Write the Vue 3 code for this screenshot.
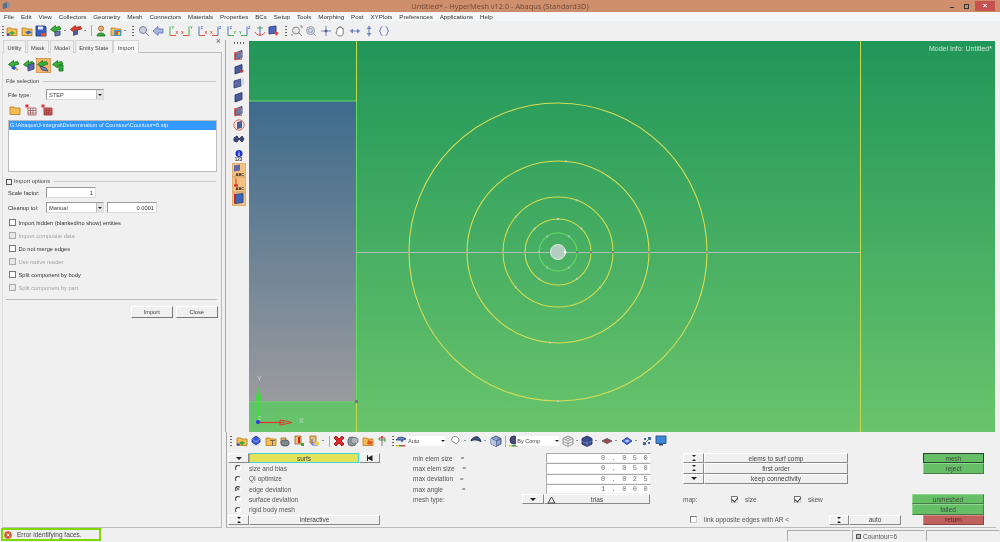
<template>
  <div class="app">
    <header class="title">
      <svg class="logo" width="9" height="9" viewBox="0 0 12 12"><path d="M1 4l6-3v8l-6 2z" fill="#5b6f8c"/><path d="M7 1l4 1v7l-4 0z" fill="#8a94a3"/></svg>
      <span class="title-text">Untitled* - HyperMesh v12.0 - Abaqus (Standard3D)</span>
      <span class="win">
        <i class="min"></i><i class="max"></i><b class="close">×</b>
      </span>
    </header>

    <nav class="menu">
      <span v-for="m in menus" :key="m">{{ m }}</span>
    </nav>

    <div class="toolbar top">
      <template v-for="(t, i) in topTools" :key="i">
        <span v-if="t === '|'" class="sep"></span>
        <span v-else-if="t === ':'" class="handle"></span>
        <span v-else-if="t === 'v'" class="dd"></span>
        <span v-else class="cell"><Ico :n="t" /></span>
      </template>
    </div>

    <div class="main">
      <aside class="panel">
        <div class="tabs">
          <span class="tab" v-for="t in tabs" :key="t" :class="{ on: t === 'Import' }">{{ t }}</span>
          <span class="tab-x">×</span>
        </div>
        <div class="body">
          <div class="imp-icons">
            <span v-for="(n, i) in importIcons" :key="n" class="imp" :class="{ on: i === 2 }"><Ico :n="n" /></span>
          </div>
          <div class="group">File selection</div>
          <div class="field">
            <label>File type:</label>
            <span class="select sel-a">STEP<i class="caret"></i></span>
          </div>
          <div class="file-tools">
            <Ico n="folder" />
            <Ico n="gridx" />
            <Ico n="gridr" />
          </div>
          <div class="list">
            <div class="list-sel">G:\Abaqus\J-integral\Determination of Countour\Countour=6.stp</div>
          </div>
          <div class="group opts"><span class="toggle"></span>Import options</div>
          <div class="field f2">
            <label>Scale factor:</label>
            <span class="input in-a">1</span>
          </div>
          <div class="field f3">
            <label>Cleanup tol:</label>
            <span class="select sel-a">Manual<i class="caret"></i></span>
            <span class="input in-a">0.0001</span>
          </div>
          <div class="checks">
            <div class="chk" v-for="c in checks" :key="c.t" :class="{ off: c.off }"><i></i>{{ c.t }}</div>
          </div>
          <div class="rule"></div>
          <div class="actions">
            <button class="pbtn">Import</button>
            <button class="pbtn">Close</button>
          </div>
        </div>
      </aside>

      <div class="vbar">
        <span class="vhandle"></span>
        <span class="vi" v-for="n in sideIcons" :key="n"><Ico :n="n" /></span>
        <span class="num">123</span>
        <span class="vo" v-for="n in sideOrange" :key="n"><Ico :n="n" :s="13" /></span>
      </div>

      <div class="view">
        <svg width="746" height="391" viewBox="249 41 746 391">
          <defs>
            <linearGradient id="part" x1="0" y1="0" x2="0" y2="1">
              <stop offset="0" stop-color="#3d6b8c" />
              <stop offset="1" stop-color="#9b9b9f" />
            </linearGradient>
          </defs>
          <rect x="249" y="101" width="107" height="301" fill="url(#part)" />
          <path d="M249 101H356M249 402H356M356.500 101V402" stroke="#62dc62" fill="none" />
          <path d="M356.500 41V101M356.500 402V432M860.500 41V432" stroke="#c9d94a" fill="none" />
          <path d="M356 252.500H860" stroke="#a8c0b4" fill="none" />
          <circle v-for="c in rings" :key="c.r" cx="558" cy="252" :r="c.r" :stroke="c.col" fill="none" stroke-width="1.100" />
          <circle cx="558" cy="252" r="7.500" fill="#b4cfc0" stroke="#e8ece8" />
          <circle cx="565" cy="252" r="1.500" fill="#fff" />
          <rect v-for="(m, i) in marks" :key="i" :x="m.x - 1" :y="m.y - 1" width="2" height="2" :fill="m.c" />
          <!-- global axes -->
          <path d="M258.500 422V392" stroke="#3be03b" stroke-width="1.200" />
          <path d="M258.500 388l-2.500 12h5z" fill="none" stroke="#3be03b" />
          <path d="M258 422.500H284" stroke="#e8332a" stroke-width="1.200" />
          <path d="M280 420v5l12-2.500z" fill="none" stroke="#e8332a" />
          <circle cx="258" cy="422" r="2" fill="#2438e8" />
          <text x="257" y="381" class="ax">Y</text>
          <text x="299" y="423" class="ax">X</text>
          <text x="258" y="420" class="ax sm">Z</text>
          <rect x="355" y="400" width="3" height="3" fill="#6d7a73" />
        </svg>
        <span class="model">Model Info: Untitled*</span>
      </div>
      <div class="edge"></div>
    </div>

    <section class="dock">
      <div class="toolbar low">
        <template v-for="(t, i) in lowTools" :key="i">
          <span v-if="t === '|'" class="sep"></span>
          <span v-else-if="t === ':'" class="handle"></span>
          <span v-else-if="t === 'v'" class="dd"></span>
          <span v-else-if="t === 'auto'" class="combo c0"><Ico n="auto" />
            <span class="combo-box">Auto<i class="tri"></i></span></span>
          <span v-else-if="t === 'comp'" class="combo c2"><Ico n="ball" />
            <span class="combo-box">By Comp<i class="tri"></i></span></span>
          <span v-else class="cell"><Ico :n="t" /></span>
        </template>
      </div>

      <div class="ctl">
        <div class="col col-a">
          <div class="row">
            <button class="btn arrow"><i class="down"></i></button>
            <button class="btn surfs">surfs</button>
            <button class="btn end"><i class="skip"></i></button>
          </div>
          <div class="row radio" v-for="(r, i) in radios" :key="r">
            <i class="dot" :class="{ on: i === 2 }"></i>{{ r }}
          </div>
          <div class="row">
            <button class="btn arrow"><i class="updown"></i></button>
            <button class="btn grow">interactive</button>
          </div>
        </div>

        <div class="col col-b">
          <div class="row" v-for="f in sizes" :key="f.l">
            <span class="lab">{{ f.l }}</span>
            <span class="eq" :style="{ marginLeft: f.e + 'px' }">=</span>
            <span class="num-in">{{ f.v }}</span>
          </div>
          <div class="row">
            <span class="lab mt">mesh type:</span>
            <button class="btn arrow b2"><i class="down"></i></button>
            <button class="btn trias"><svg width="9" height="8" viewBox="0 0 9 8"><path d="M4.500 1L8 7H1z" fill="none" stroke="#444" /></svg><span>trias</span></button>
          </div>
        </div>

        <div class="col col-c">
          <div class="row" v-for="(b, i) in opts" :key="b">
            <button class="btn arrow"><i :class="i === 2 ? 'down' : 'updown'"></i></button>
            <button class="btn wide">{{ b }}</button>
          </div>
          <div class="row"></div>
          <div class="row map">
            <span class="map-l">map:</span>
            <i class="box tick m1"></i><span class="m-t">size</span>
            <i class="box tick m2"></i><span class="m-t">skew</span>
          </div>
          <div class="row"></div>
          <div class="row link">
            <i class="box"></i>
            <span class="link-t">link opposite edges with AR &lt;</span>
            <button class="btn arrow b3"><i class="updown"></i></button>
            <button class="btn autob">auto</button>
          </div>
        </div>

        <div class="col col-d">
          <button class="go s sel">mesh</button>
          <button class="go s">reject</button>
          <div class="row"></div>
          <div class="row"></div>
          <button class="go">unmeshed</button>
          <button class="go">failed</button>
          <button class="go s red">return</button>
        </div>
      </div>
    </section>

    <footer class="status">
      <div class="err">
        <svg width="8" height="8" viewBox="0 0 8 8"><circle cx="4" cy="4" r="3.800" fill="#d9532b" /><path d="M2.500 2.500l3 3m0-3l-3 3" stroke="#fff" /></svg>
        <span>Error identifying faces.</span>
      </div>
      <div class="cells">
        <span class="scell s1"></span>
        <span class="scell s2"><i></i>Countour=6</span>
        <span class="scell s3"></span>
      </div>
    </footer>
  </div>
</template>

<script setup>
import { h } from 'vue'

const menus = ['File', 'Edit', 'View', 'Collectors', 'Geometry', 'Mesh', 'Connectors', 'Materials', 'Properties', 'BCs', 'Setup', 'Tools', 'Morphing', 'Post', 'XYPlots', 'Preferences', 'Applications', 'Help']
const tabs = ['Utility', 'Mask', 'Model', 'Entity State', 'Import']

const ax = (vc, hc, a, b) => [
  ['M3 1.500V10.500', 'none', vc],
  ['M3 10.500H9', 'none', hc],
  { t: a, x: 4.500, y: 4, c: vc },
  { t: b, x: 8.500, y: 8.500, c: hc },
]
const axr = (vc, hc, a, b) => [
  ['M8 1.500V10.500', 'none', vc],
  ['M2 10.500H8', 'none', hc],
  { t: a, x: 9, y: 4, c: vc },
  { t: b, x: 0, y: 8.500, c: hc },
]
const blue = '#3d5fc8', red = '#e0402e', green = '#2fae3a'
const folder = [['M1 3h4l1 1h5v6.500H1z', '#f4bd58', '#b98428']]
const plate = [['M2 4l7-2.500v7L2 11z', '#4a5c9a', '#2e3a70']]
const plateR = [['M2 4l7-2.500v7L2 11z', '#6c78a6', '#3c4878'], ['M1.500 3.500h7v7h-7z', 'none', '#e0604e']]
const garrow = [['M0.500 4.500L5.500 0.500v2l4-1 1.500 2.500-5 1.500v2.500z', '#3ab03a', '#1f7d1f']]

const icons = {
  cluster: [...folder.slice(0), ['M6 6l3 2-3 2-3-2z', '#3ab03a'], ['M2 8l2 1.500-2 1.500-1.500-1.500z', '#2b4bd0']],
  folderb: [...folder, ['M4 7l4-1.500 3 2-4 2z', '#3a6ac0']],
  floppy: [['M1 1h9l1 1v9H1z', '#3a5fc0', '#243c80'], ['M3 1.500h5v3H3z', '#e8ecf4'], ['M6 8l5 0v3H6z', '#e0502e']],
  garrow: [...garrow, ['M5 7l5-1v4l-5 1z', '#6b78a8', '#3c4878']],
  rarrow: [['M0.500 4.500L5.500 0.500v2l5-1 1 2.500-6 1.500v2.500z', '#e0402e', '#a02418'], ['M3 6l5-1.500v5l-5 1.500z', '#4a5c9a']],
  person: [['M6 1a2.300 2.300 0 110 5 2.300 2.300 0 010-5z', '#e8b070', '#9a6a30'], ['M2 11c0-4 8-4 8 0z', '#3aa03a', '#1f7d1f']],
  colorf: [...folder, ['M4 5h7v6H4z', '#3a9ad8'], ['M6 6h3v4H6z', '#e0502e'], ['M8 7h2v3H8z', '#f0d030']],
  zoom: [['M5 1.500a3.500 3.500 0 110 7 3.500 3.500 0 010-7z', '#c8d0dc', '#6878a0'], ['M7.500 7.500l3.500 3.500', 'none', '#6878a0']],
  larrow: [['M1 6l5-4.500v2.500h5v4H6v2.500z', '#a8b4e0', '#6a78b8']],
  ax1: ax(green, red, 'Y', 'X'),
  ax2: axr(green, red, 'Y', 'X'),
  ax3: ax(blue, red, 'Z', 'X'),
  ax4: axr(blue, red, 'Z', 'X'),
  ax5: ax(blue, green, 'Z', 'Y'),
  ax6: axr(blue, green, 'Z', 'Y'),
  anchor: [['M6 1v10', 'none', blue], ['M1 7c1 4 9 4 10 0', 'none', red], ['M3 3h6', 'none', green]],
  persp: [['M1 2l7-1v7l-7 1z', '#4a6ac0', '#2e3a70'], ['M6 6l5 2-3 3z', '#e0402e']],
  fitz: [['M5 2a3.500 3.500 0 110 7 3.500 3.500 0 010-7z', '#e8e8e8', '#808080'], ['M7.500 7.500l3.500 3.500M9 1h2v2M1 11v-2', 'none', '#707078']],
  circz: [['M5.500 1.500a4 4 0 110 8 4 4 0 010-8z', '#d8dce4', '#9098a8'], ['M5.500 3.500a2 2 0 110 4 2 2 0 010-4zM8.500 8.500l2.500 2.500', 'none', '#9098a8']],
  cross: [['M6 1v10M1 6h10', 'none', '#6878a8'], ['M4.500 6h3M6 4.500v3', 'none', '#38487a']],
  hand: [['M3 6V3.500h1.200V2.500h1.300v-1h1.200v1H8v1h1.200V8c0 2-1 3-3 3S3 10 2 8z', '#fff', '#707070']],
  lr: [['M0.500 6L4 3.500v5zM11.500 6L8 3.500v5z', '#7a90c8'], ['M3 6h6', 'none', '#5a70a8']],
  ud: [['M6 0.500L3.500 4h5zM6 11.500L3.500 8h5z', '#7a90c8'], ['M6 3v6', 'none', '#5a70a8']],
  brace: [['M4.500 1.500C2 2 3 5 1.500 6 3 7 2 10 4.500 10.500M7.500 1.500C10 2 9 5 10.500 6 9 7 10 10 7.500 10.500', 'none', '#4a62b0']],
  i1: [...garrow, ['M3 8l3-2 3 2-3 2z', '#2b4bd0'], ['M7 8l4 1-2 2z', '#e0a030']],
  i2: [...garrow, ['M5 5l6-2v6l-6 2z', '#5a68a8', '#3c4878']],
  i3: [...garrow, ['M3 6l6 2 2 3-6-1z', '#7888b8', '#3c4878']],
  i4: [...garrow, ['M7 5h4v6H7z', '#28a848', '#1f7d1f']],
  folder,
  gridx: [['M0.500 0.500h3v3h-3z', '#e0303a'], ['M3 4h8v7H3z', '#fff', '#a06060'], ['M3 6.500h8M3 9h8M5.500 4v7M8 4v7', 'none', '#a06060']],
  gridr: [['M0.500 0.500h3v3h-3z', '#e0303a'], ['M3 4h8v7H3z', '#d86060', '#a04040'], ['M3 6.500h8M3 9h8M5.500 4v7M8 4v7', 'none', '#a04040']],
  s1: plateR,
  s2: [...plate, ['M6 8l5-1-2 3z', '#e0302a']],
  s3: [['M1 4l7-2v7l-7 2z', '#5a68a8', '#3c4878'], ['M8 2l3-1v6l-3 1z', '#d0d4dc']],
  s4: plate,
  s5: plateR,
  s6: [['M6 .800a5.200 5.200 0 110 10.400 5.200 5.200 0 010-10.400z', '#f4e8e4', '#d86050'], ['M4 3l5-1v7l-5 1z', '#4a5c9a']],
  s7: [['M1 5l3-2 2 3-2 3-3-1zM6 6l3-3 2 3-2 3z', '#3c4c80', '#252f58']],
  s8: [['M6 3a3.500 3.500 0 110 7 3.500 3.500 0 010-7z', '#2233c8'], ['M5.500 4.500h1v1h-1zM5.500 6h1v3h-1z', '#fff']],
  o1: [['M1 1l6-1v6l-6 1z', '#5a68a8'], { t: 'ABC', x: 2.500, y: 11, c: '#222' }],
  o2: [['M3 0v7', 'none', '#d02020'], ['M1 6h4v2H1z', '#d02020'], { t: 'ABC', x: 2.500, y: 11.500, c: '#222' }],
  o3: [['M2 2l8-1v9l-8 1z', '#3a68b8', '#284880'], ['M1.500 1v10', 'none', '#d02020']],
  b1: [...folder, ['M6 6l3 2-3 2-3-2z', '#2eae2e'], ['M2 8l2 1.500-2 1.500-1.500-1.500z', '#2b4bd0']],
  b2: [['M2 4l4-3 4 3v3l-4 3-4-3z', '#3a5ad8', '#2438a0'], ['M2 4l4 3 4-3', 'none', '#90a8f0']],
  b3: [...folder, ['M5 5h5v1H8v5H7V6H5z', '#7a6a50']],
  b4: [['M2 3h5v5H2z', '#e8c080', '#a07030'], ['M2 7a4 2 0 018 0v2a4 2 0 01-8 0z', '#808890', '#505860']],
  b5: [['M2 1h6v8H2z', '#e8c080', '#a07030'], ['M5 2h2v6H5z', '#d02020'], ['M8 8h3v3H8z', '#2eae2e']],
  b6: [['M2 1h6v7H2z', '#e8c080', '#a07030'], ['M4 4v6M4 10h6', 'none', '#3a5ad8'], ['M7 7h4v3H7z', '#f0d040']],
  del: [['M1 3l2-2 3 3 3-3 2 2-3 3 3 3-2 2-3-3-3 3-2-2 3-3z', '#e02828', '#a01818']],
  cyl: [['M1 5a4 3 0 018 0v3a4 3 0 01-8 0z', '#9098a0', '#606870'], ['M4 4a4 3 0 017 0v3a4 3 0 01-7 0z', '#b0b4ba', '#707880']],
  foldr: [...folder, ['M6 5l5 2-2 3-4-1z', '#e05828']],
  usb: [['M6 1v10', 'none', '#707070'], ['M3 3h6', 'none', '#d03030'], ['M3 3v2h6M9 3v4', 'none', '#3a8a3a'], ['M5 1h2v2H5z', '#e04040']],
  auto: [['M1 5c1-3 7-4 10-1l-3 1-1 2-1-2z', '#5a7ab8', '#3a5080'], ['M1 10h3v1.500H1z', '#e0c030'], ['M4 10h3v1.500H4z', '#30a040'], ['M7 10h3v1.500H7z', '#e04040']],
  blob: [['M2 3c2-3 7-1 7 2s-2 2-3 4c-1-2-6-2-4-6z', '#fff', '#707880']],
  hat: [['M1 6c0-3 5-5 7-4 2 1 3 4 3 5-2-2-7-3-10-1z', '#3a5278', '#28384f']],
  cube: [['M6 1l5 2.500v5.500L6 11.500 1 9V3.500z', '#8aa0c8', '#3c5078'], ['M1 3.500L6 6l5-2.500M6 6v5.500', 'none', '#3c5078'], ['M1 3.500L6 6v5.500L1 9z', '#b8c4dc']],
  ball: [['M6 1a4 4 0 110 8 4 4 0 010-8z', '#4a4a7a', '#30305a'], ['M1 10h3v1.500H1z', '#e0c030'], ['M4 10h3v1.500H4z', '#30a040'], ['M7 10h3v1.500H7z', '#e04040']],
  wire: [['M6 1l5 2.500v5.500L6 11.500 1 9V3.500z', '#f0f0f0', '#8a8a8a'], ['M1 3.500L6 6l5-2.500M6 6v5.500M3.500 2.200l5 2.500M8.500 2.200l-5 2.500M1 6.200l5 2.600 5-2.600', 'none', '#9a9a9a']],
  solid: [['M6 1l5 2.500v5.500L6 11.500 1 9V3.500z', '#3a4a90', '#28305f'], ['M1 6.200l5 2.600 5-2.600M6 6v5.500', 'none', '#7080c0']],
  dia: [['M6 3.500l5 2.500-5 2.500L1 6z', '#a04a50', '#5a5a5a']],
  dia2: [['M6 2.500l5 3.500-5 3.500L1 6z', '#4a70d8', '#283f90'], ['M6 4.500l2.500 1.500L6 7.500 3.500 6z', '#b8c8f0']],
  nodes: [['M2 7h3v3H2zM7 2h3v3H7zM7 7h2v2H7zM3 3h2v2H3z', '#4a62b0'], ['M4 8l4-4', 'none', '#30a040']],
  screen: [['M1 1h10v7.500H1z', '#3a88d8', '#285080'], ['M4 9h4v1.500H4z', '#404860']],
}

const Ico = (props) => {
  const size = props.s || 12
  const kids = (icons[props.n] || []).map((s) =>
    Array.isArray(s)
      ? h('path', { d: s[0], fill: s[1], stroke: s[2] || 'none', 'stroke-width': 0.9 })
      : h('text', { x: s.x, y: s.y, fill: s.c, 'font-size': 4, 'font-weight': 700, 'font-family': 'Liberation Sans, sans-serif' }, s.t)
  )
  return h('svg', { viewBox: '0 0 12 12', width: size, height: size, style: 'display:block' }, kids)
}
Ico.props = ['n', 's']

const topTools = [':', 'cluster', 'folderb', 'floppy', 'garrow', 'v', 'rarrow', 'v', '|', 'person', 'colorf', 'v', ':', 'zoom', 'larrow', 'ax1', 'ax2', 'ax3', 'ax4', 'ax5', 'ax6', 'anchor', 'persp', ':', 'fitz', 'circz', 'cross', 'hand', 'lr', 'ud', 'brace']
const importIcons = ['i1', 'i2', 'i3', 'i4']
const sideIcons = ['s1', 's2', 's3', 's4', 's5', 's6', 's7', 's8']
const sideOrange = ['o1', 'o2', 'o3']
const lowTools = [':', 'b1', 'b2', 'b3', 'b4', 'b5', 'b6', 'v', '|', 'del', 'cyl', 'foldr', 'usb', ':', 'auto', 'blob', 'v', 'hat', 'v', 'cube', '|', 'comp', 'wire', 'v', 'solid', 'v', 'dia', 'v', 'dia2', 'v', 'nodes', 'screen']

const checks = [
  { t: 'Import hidden (blanked/no show) entities' },
  { t: 'Import composite data', off: true },
  { t: 'Do not merge edges' },
  { t: 'Use native reader', off: true },
  { t: 'Split component by body' },
  { t: 'Split component by part', off: true },
]
const radios = ['size and bias', 'QI optimize', 'edge deviation', 'surface deviation', 'rigid body mesh']
const sizes = [
  { l: 'min elem size', e: 8, v: '0.050' },
  { l: 'max elem size', e: 8, v: '0.050' },
  { l: 'max deviation', e: 7, v: '0.025' },
  { l: 'max angle', e: 19, v: '1.000' },
]
const opts = ['elems to surf comp', 'first order', 'keep connectivity']

const rings = [
  { r: 149, col: '#d7dd55' },
  { r: 91, col: '#d7dd55' },
  { r: 55, col: '#d3dc4a' },
  { r: 33, col: '#cfdc4a' },
  { r: 19, col: '#62dc62' },
]
const polar = (r, a, c) => ({
  x: 558 + r * Math.cos((a * Math.PI) / 180),
  y: 252 + r * Math.sin((a * Math.PI) / 180),
  c,
})
const marks = [
  polar(149, 0, '#8f9a88'), polar(149, 180, '#a8b4a0'), polar(149, 90, '#c0c8b0'),
  polar(91, 0, '#8f9a88'), polar(91, 180, '#a8b4a0'), polar(91, -85, '#c0c8b0'), polar(91, 95, '#c0c8b0'),
  polar(55, 0, '#6f7a70'), polar(55, 180, '#a8b4a0'), polar(55, -70, '#bcc8b0'), polar(55, 40, '#bcc8b0'), polar(55, 140, '#bcc8b0'), polar(55, -140, '#bcc8b0'),
  polar(33, 0, '#6f7a70'), polar(33, 180, '#a8b4a0'), polar(33, -90, '#bcc8b0'), polar(33, -45, '#bcc8b0'), polar(33, 55, '#bcc8b0'), polar(33, 125, '#bcc8b0'), polar(33, -135, '#bcc8b0'),
  polar(19, 0, '#6f7a70'), polar(19, 180, '#b0c0b0'), polar(19, -55, '#b0c0b0'), polar(19, 55, '#b0c0b0'), polar(19, 125, '#b0c0b0'), polar(19, -125, '#b0c0b0'),
]
</script>

<style>
html, body { margin: 0; background: #f0f0f0; overflow: hidden; }
</style>

<style scoped>
* { box-sizing: border-box; }
.app { width: 1000px; height: 542px; display: flex; flex-direction: column; overflow: hidden;
  background: #f0f0f0; color: #444; font: 6.500px "Liberation Sans", Arial, sans-serif; filter: blur(0.45px); }
i { display: block; font-style: normal; }

.title { height: 12px; flex: none; display: flex; align-items: center; justify-content: center; position: relative;
  background: #d08f6c; border-bottom: 1px solid #c98a67; }
.logo { position: absolute; left: 2px; top: 1px; }
.title-text { font: 7.400px "Open Sans", sans-serif; color: #6b4a38; }
.win { position: absolute; right: 5px; top: 0; height: 12px; display: flex; align-items: center; }
.min { width: 4px; height: 1.500px; background: #333; margin-right: 10px; margin-top: 3px; }
.max { width: 5px; height: 5px; border: 1px solid #333; margin-right: 6px; }
.close { width: 20px; height: 10px; background: #c75050; color: #fff; text-align: center; font: 700 8px/10px "Liberation Sans", sans-serif; }

.menu { height: 9px; flex: none; display: flex; gap: 6.950px; padding-left: 4px; background: #f5f6f7; line-height: 9px; color: #333; font-size: 6.200px; }

.toolbar { display: flex; align-items: center; }
.toolbar.top { height: 19px; flex: none; background: #f0f0f0; }
.cell { width: 14.500px; display: flex; justify-content: center; flex: none; }
.handle { width: 8px; height: 12px; flex: none; background: radial-gradient(circle, #666 0.6px, transparent 0.8px) center top / 2px 3px repeat-y; }
.toolbar.top .handle:first-child { width: 5px; }
.dd { width: 5.500px; flex: none; position: relative; height: 6px; }
.dd::after { content: ""; position: absolute; left: 1px; top: 2px; border: 1.800px solid transparent; border-top-color: #333; border-bottom: 0; }
.sep { width: 5.500px; height: 11px; flex: none; background: linear-gradient(#aaa, #aaa) center / 1px 100% no-repeat; }

.main { height: 392px; flex: none; display: flex; }
.panel { width: 222px; height: 488px; flex: none; position: relative; z-index: 1; background: #f0f0f0; font-size: 5.700px; }
.tabs { height: 12px; display: flex; padding-left: 3px; position: relative; }
.tab { padding: 3px 3.500px 0; border: 1px solid #d4d4d4; border-bottom: 0; margin-right: 0.600px; background: #f0f0f0; line-height: 8px; height: 13px; }
.tab.on { background: #f6f6f6; position: relative; z-index: 1; }
.tab-x { position: absolute; right: 1px; top: -4px; font-size: 9px; color: #666; }
.body { height: 476px; margin-left: 2px; border: 1px solid #bbb; border-left-color: #ddd; display: flex; flex-direction: column; padding: 0 4px 0 3px; }
.imp-icons { display: flex; padding-left: 1px; margin-top: 5px; height: 15px; }
.imp { width: 14.500px; height: 15px; display: flex; align-items: center; justify-content: center; }
.imp.on { background: #f6b56e; border: 1px solid #d89a58; }
.group { margin-top: 4px; height: 9px; line-height: 9px; display: flex; align-items: center; color: #444; }
.group::after { content: ""; flex: 1; height: 1px; background: #c8c8c8; margin: 0 1px 0 4px; }
.field { display: flex; align-items: center; margin-top: 3px; height: 11px; padding-left: 2px; }
.field label { width: 38px; flex: none; color: #333; }
.select { height: 11px; position: relative; background: #fff; border: 1px solid #999; border-bottom-color: #ddd; border-right-color: #ddd; padding: 1px 0 0 2px; line-height: 8px; }
.sel-a { width: 58px; }
.caret { position: absolute; right: 0; top: 0; bottom: 0; width: 7px; background: #e4e4e4; border-left: 1px solid #bbb; }
.caret::after { content: ""; position: absolute; left: 1px; top: 4px; border: 2px solid transparent; border-top-color: #222; border-bottom: 0; }
.file-tools { display: flex; gap: 4px; margin-top: 3px; padding-left: 3px; height: 14px; align-items: center; }
.list { height: 52px; margin: 3px 0 0 2px; width: 209px; background: #fff; border: 1px solid #bbb; padding: 0; flex: none; }
.list-sel { height: 9px; background: #3399ff; color: #e8f2ff; line-height: 9px; padding-left: 1px; font-size: 5.600px; white-space: nowrap; }
.opts { margin-top: 5px; }
.toggle { width: 6px; height: 6px; border: 1px solid #555; margin-right: 2px; flex: none; }
.f2 { margin-top: 1px; }
.f3 { margin-top: 4px; }
.input { display: block; height: 11px; background: #fff; border: 1px solid #999; border-bottom-color: #ddd; border-right-color: #ddd; text-align: right; padding: 1px 2px 0 0; line-height: 8px; color: #333; }
.in-a { width: 50px; }
.f3 .input { margin-left: 3px; }
.checks { margin-top: 3px; padding-left: 3px; }
.chk { height: 13px; display: flex; align-items: center; color: #333; }
.chk i { width: 6.500px; height: 6.500px; background: #fff; border: 1px solid #777; margin-right: 3px; }
.chk.off { color: #a4a4a4; }
.chk.off i { background: #e8e8e8; border-color: #aaa; }
.rule { height: 1px; background: #bdbdbd; margin: 5px 0 0 0; width: 211px; flex: none; }
.actions { display: flex; gap: 3px; justify-content: flex-end; margin: 6px 0 0 0; width: 211.700px; }
.pbtn { width: 42px; height: 11.500px; padding: 0; background: #f0f0f0; border: 1px solid #fff; border-right-color: #777; border-bottom-color: #777; font: inherit; color: #444; }

.vbar { width: 26px; flex: none; border-left: 1px solid #aaa; margin-left: 3px; display: flex; flex-direction: column; align-items: center; position: relative; }
.vhandle { width: 12px; height: 4px; margin: 1px 0 3px; background: radial-gradient(circle, #666 0.6px, transparent 0.8px) left center / 3px 2px repeat-x; }
.vi { height: 14px; display: flex; align-items: center; }
.num { font-size: 4.500px; font-weight: 700; line-height: 5px; color: #444; margin: -3px 0 1px; }
.vo { width: 14px; height: 14.300px; background: #f6c283; border: 1px solid #e0b070; display: flex; align-items: center; justify-content: center; }

.view { width: 746px; height: 391px; flex: none; margin-top: 1px; position: relative; margin-left: -2px;
  background: linear-gradient(#219659, #69c46c); }
.view svg { display: block; }
.ax { font: 7px "Liberation Sans", sans-serif; fill: #c4dcc4; }
.ax.sm { font-size: 5px; }
.model { position: absolute; right: 3px; top: 4px; color: #cfe8d5; font-size: 7px; }
.edge { width: 5px; flex: none; }

.dock { height: 96px; flex: none; margin: 0 4px 0 226px; border-left: 1px solid #aaa; border-bottom: 1px solid #bcbcbc; position: relative; }
.toolbar.low { height: 16px; margin-top: 1px; }
.low .cell { width: 14.300px; }
.combo { display: flex; align-items: center; flex: none; position: relative; }
.c0 { width: 50px; margin: 0 4px 0 -2px; }
.c2 { width: 55px; margin-left: -3px; padding-left: 3px; }
.combo-box { background: #fff; height: 10px; flex: 1; position: relative; line-height: 10px; font-size: 5.500px; padding-left: 1px; }
.c2 .combo-box { margin: 0 1px 0 -4px; }
.tri { position: absolute; right: 0; top: 4px; border: 2px solid transparent; border-top-color: #222; border-bottom: 0; }

.ctl { display: flex; margin-top: 4px; padding-left: 1px; }
.col { display: flex; flex-direction: column; flex: none; }
.row { height: 10.300px; display: flex; align-items: center; flex: none; }
.col-a { width: 152px; }
.col-b { width: 237px; margin-left: 33px; }
.col-c { width: 218px; margin-left: 33px; }
.col-d { width: 72px; margin-left: 11px; align-items: flex-end; }
.btn { height: 10.300px; padding: 0; font: inherit; color: #444; background: #f0f0f0; border: 1px solid #fff; border-right-color: #888; border-bottom-color: #888; display: flex; align-items: center; justify-content: center; flex: none; }
.arrow { width: 21px; }
.surfs { width: 110px; background: #e3e35a; border: 1px solid #3fd5d5; color: #444; }
.end { width: 21px; }
.grow { width: 131px; }
.down { width: 0; height: 0; border: 3px solid transparent; border-top-color: #222; border-bottom: 0; }
.updown { width: 0; height: 6px; border: 2px solid transparent; border-top: 2.500px solid #222; border-bottom: 2.500px solid #222; }
.skip { width: 6px; height: 6px; background: #222; clip-path: polygon(0 0, 25% 0, 25% 40%, 100% 0, 100% 100%, 25% 60%, 25% 100%, 0 100%); }
.radio { padding-left: 7px; color: #555; }
.dot { width: 6px; height: 6px; border-radius: 50%; border: 1px solid #fff; border-top-color: #444; border-left-color: #444; background: #f8f8f8; margin-right: 8px; }
.dot.on { background: #555; box-shadow: inset 0 0 0 1px #eee; }
.lab { color: #555; }
.eq { color: #555; font-size: 6px; }
.num-in { position: absolute; left: 319px; width: 105px; height: 10.300px; background: #fff; border: 1px solid #aaa; border-right-color: #eee; border-bottom-color: #eee; font: 7px/9px "Liberation Mono", monospace; letter-spacing: 6.400px; text-align: left; color: #707070; white-space: nowrap; padding-left: 54px; }
.mt { width: 109px; }
.b2 { width: 22px; }
.trias { width: 106px; position: relative; }
.trias svg { position: absolute; left: 2px; top: 1px; }
.wide { width: 144px; }
.map-l { width: 48px; color: #555; }
.box { width: 7px; height: 7px; background: #fff; border: 1px solid #777; border-right-color: #ccc; border-bottom-color: #ccc; position: relative; flex: none; }
.tick::after { content: ""; position: absolute; left: 1px; top: -1px; width: 3px; height: 5px; border: solid #333; border-width: 0 1px 1px 0; transform: rotate(40deg); }
.m1, .m2 { margin-right: 7px; }
.m-t { width: 49px; color: #555; }
.m-t:last-child { width: auto; }
.link .box { margin-left: 7px; }
.link-t { width: 125px; margin-left: 7px; color: #555; }
.b3 { width: 20px; }
.autob { width: 52px; }
.go { height: 10.300px; width: 72px; padding: 0; font: inherit; color: #3b4a3a; background: #66bf66; border: 1px solid #8fd88f; border-right-color: #4a7a4a; border-bottom-color: #4a7a4a; flex: none; }
.go.s { width: 61px; }
.go.sel { border: 1px solid #24452c; }
.go.red { background: #c0605f; border-color: #d88a8a #8a4545 #8a4545 #d88a8a; color: #4a2b2b; }

.status { height: 13px; flex: none; display: flex; justify-content: space-between; }
.err { width: 100px; height: 13px; margin-left: 1px; border: 2px solid #7fd800; display: flex; align-items: center; padding-left: 1px; gap: 5px; color: #444; }
.cells { display: flex; margin-top: 2px; }
.scell { height: 11px; border: 1px solid #aaa; border-bottom: 0; border-right-color: #eee; margin-left: 1px; display: flex; align-items: center; }
.s1 { width: 64px; }
.s2 { width: 73px; padding-left: 3px; color: #555; }
.s2 i { width: 5px; height: 5px; border: 1px solid #555; background: #bbb; margin-right: 2px; }
.s3 { width: 74px; }
</style>
